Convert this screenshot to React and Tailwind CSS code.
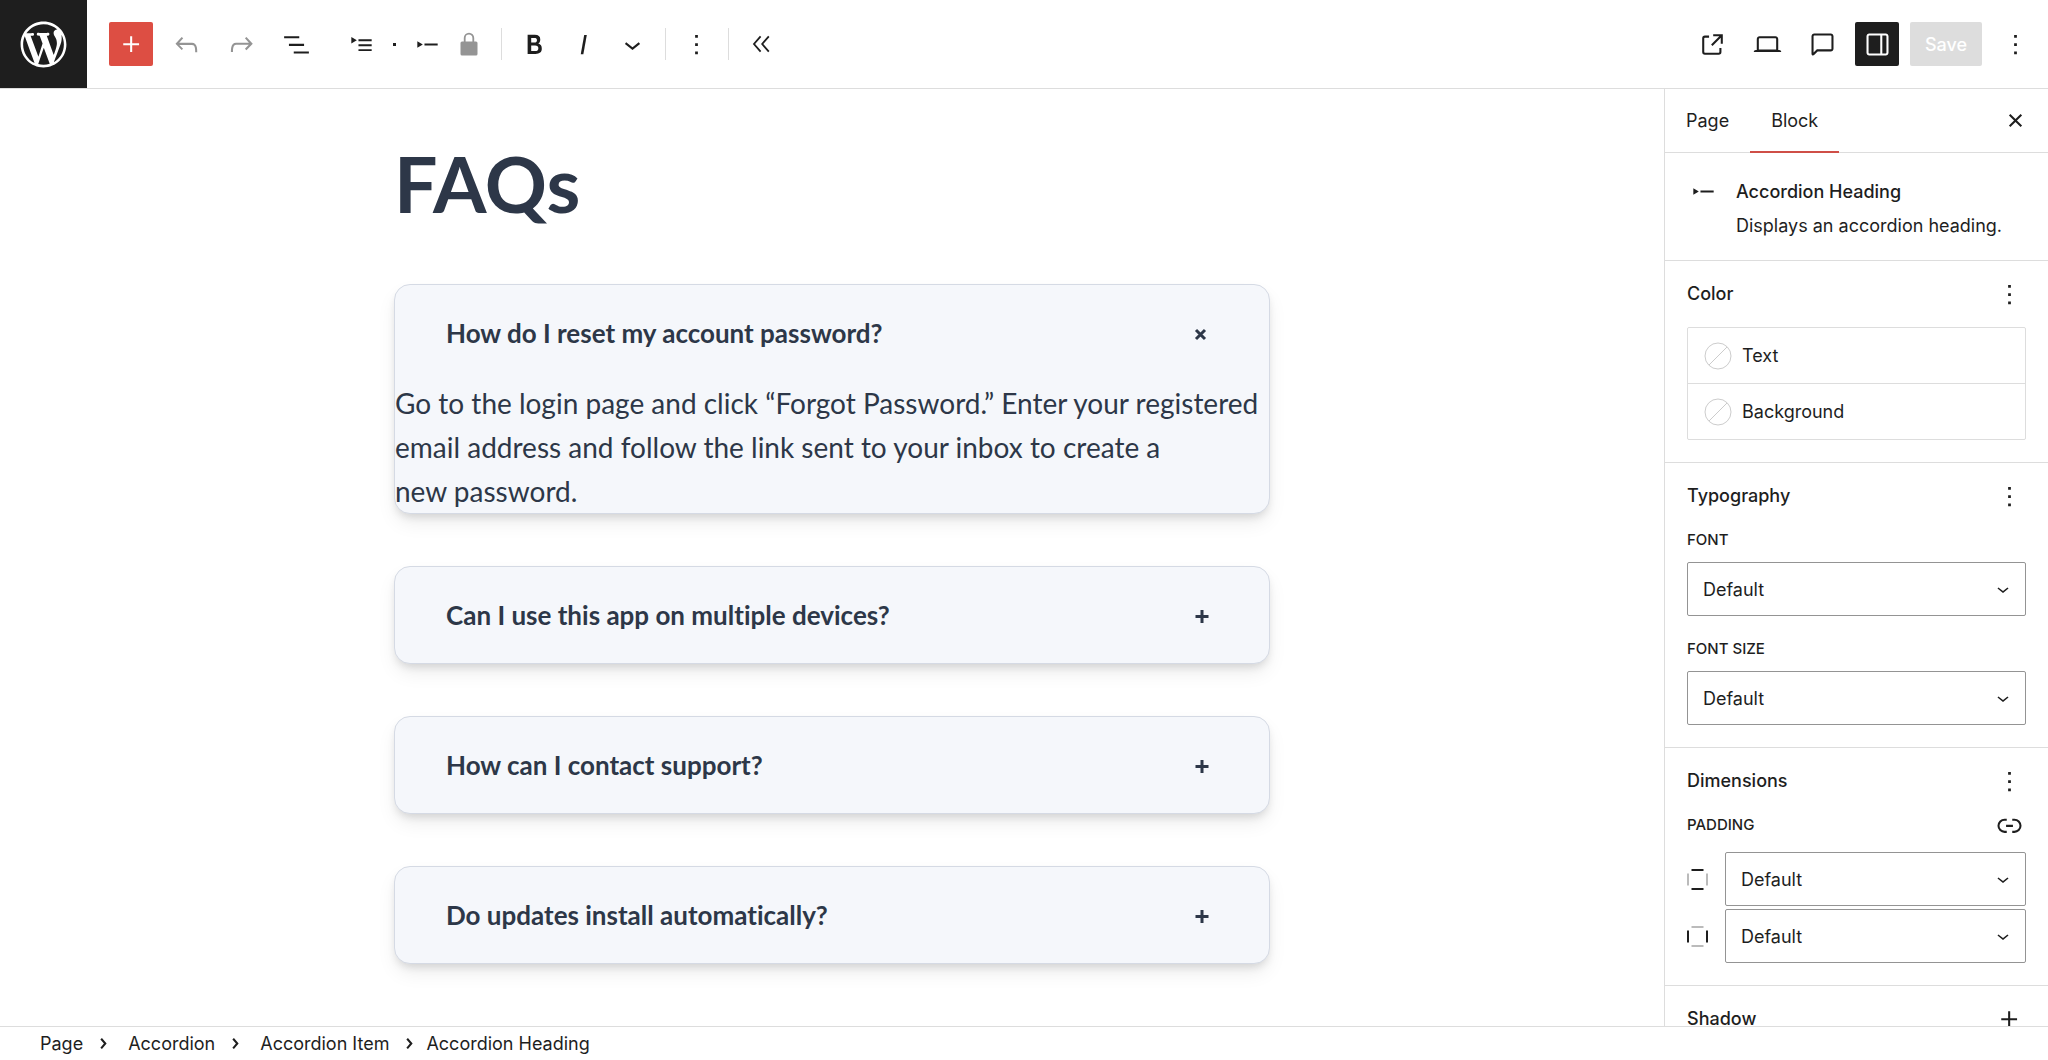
import React, { useState } from 'react'
import clsx from 'clsx'

const ICONS = {
  wordpress: 'M20 10c0-5.51-4.49-10-10-10C4.48 0 0 4.49 0 10c0 5.52 4.48 10 10 10 5.51 0 10-4.48 10-10zM7.78 15.37L4.37 6.22c.55-.02 1.17-.08 1.17-.08.5-.06.44-1.13-.06-1.11 0 0-1.45.11-2.37.11-.18 0-.37 0-.58-.01C4.12 2.69 6.87 1.11 10 1.11c2.33 0 4.45.87 6.05 2.34-.68-.11-1.65.39-1.65 1.58 0 .74.45 1.36.9 2.1.35.61.55 1.36.55 2.46 0 1.49-1.4 5-1.4 5l-3.03-8.37c.54-.02.82-.17.82-.17.5-.05.44-1.25-.06-1.22 0 0-1.44.12-2.38.12-.87 0-2.33-.12-2.33-.12-.5-.03-.56 1.2-.06 1.22l.92.08 1.26 3.41zM17.41 10c.24-.64.74-1.87.43-4.25.7 1.29 1.05 2.71 1.05 4.25 0 3.29-1.73 6.24-4.4 7.78.97-2.59 1.94-5.2 2.92-7.78zM6.1 18.09C3.12 16.65 1.11 13.53 1.11 10c0-1.3.23-2.48.72-3.59C3.25 10.3 4.67 14.2 6.1 18.09zm4.03-6.63l2.58 6.98c-.86.29-1.76.45-2.71.45-.79 0-1.57-.11-2.29-.33.81-2.38 1.62-4.74 2.42-7.1z',
  plus: 'M11 12.5V17.5H12.5V12.5H17.5V11H12.5V6H11V11H6V12.5H11Z',
  undo: 'M18.3 11.7c-.6-.6-1.4-.9-2.3-.9H6.7l2.9-3.3-1.1-1-4.5 5L8.5 16l1-1-2.7-2.7H16c.5 0 .9.2 1.3.5 1 1 1 3.4 1 4.5v.3h1.5v-.2c0-1.5 0-4.3-1.5-5.7z',
  redo: 'M15.6 6.5l-1.1 1 2.9 3.3H8c-.9 0-1.7.3-2.3.9-1.4 1.5-1.4 4.2-1.4 5.6v.2h1.5v-.3c0-1.1 0-3.5 1-4.5.3-.3.7-.5 1.3-.5h9.2L14.5 15l1.1 1.1 4.6-4.6-4.6-5z',
  listView: 'M3 6h11v1.5H3V6Zm3.5 5.5h11V13h-11v-1.5ZM21 17H10v1.5h11V17Z',
  accordion: 'M4.6 6.6v4.6L8.6 8.9zM9.8 8.2H19.4v1.4H9.8zM9.8 11.8H19.4v1.4H9.8zM9.8 15.4H19.4v1.4H9.8z',
  heading: 'M4.6 9.7v4.6L8.6 12zM9.8 11.3H19.4v1.4H9.8z',
  bold: 'M14.7 11.3c1-.6 1.5-1.6 1.5-3 0-2.3-1.3-3.4-4-3.4H7v14h5.8c1.4 0 2.5-.3 3.3-1 .8-.7 1.2-1.7 1.2-2.9.1-1.9-.8-3.1-2.6-3.7zm-5.1-4h2.3c.6 0 1.1.1 1.4.4.3.3.5.7.5 1.2s-.2 1-.5 1.2c-.3.3-.8.4-1.4.4H9.6V7.3zm4.6 9c-.4.3-1 .4-1.7.4H9.6v-3.9h2.9c.7 0 1.3.2 1.7.5.4.3.6.8.6 1.5s-.2 1.2-.6 1.5z',
  italic: 'M12.5 5L10 19h1.9l2.5-14z',
  chevronDown: 'M17.5 11.6L12 16l-5.5-4.4.9-1.2L12 14l4.5-3.6 1 1.2z',
  chevronRight: 'M10.86 8.04L14.28 12.03L10.86 16.02L9.72 15.04L12.3 12.03L9.72 9.02L10.86 8.04Z',
  more: 'M13 19h-2v-2h2v2zm0-6h-2v-2h2v2zm0-6h-2V5h2v2z',
  close: 'M12 13.06l3.712 3.713 1.061-1.06L13.061 12l3.712-3.712-1.06-1.06L12 10.938 8.288 7.227l-1.061 1.06L10.939 12l-3.712 3.712 1.06 1.061L12 13.061z',
  external: 'M19.5 4.5h-7V6h4.44l-5.97 5.97 1.06 1.06L18 7.06v4.44h1.5v-7Zm-13 1a2 2 0 0 0-2 2v10a2 2 0 0 0 2 2h10a2 2 0 0 0 2-2v-3H17v3a.5.5 0 0 1-.5.5h-10a.5.5 0 0 1-.5-.5v-10a.5.5 0 0 1 .5-.5h3V5.5h-3Z',
  desktop: 'M20.5 16h-.7V8c0-1.1-.9-2-2-2H6.2c-1.1 0-2 .9-2 2v8h-.7c-.8 0-1.5.7-1.5 1.5h20c0-.8-.7-1.5-1.5-1.5zM5.7 8c0-.3.2-.5.5-.5h11.6c.3 0 .5.2.5.5v7.6H5.7V8z',
  comment: 'M18 4H6c-1.1 0-2 .9-2 2v12.9c0 .6.5 1.1 1.1 1.1.3 0 .5-.1.8-.3L8.5 17H18c1.1 0 2-.9 2-2V6c0-1.1-.9-2-2-2zm.5 11c0 .3-.2.5-.5.5H7.9l-2.4 2.4V6c0-.3.2-.5.5-.5h12c.3 0 .5.2.5.5v9z',
  drawer: 'M18 4H6c-1.1 0-2 .9-2 2v12c0 1.1.9 2 2 2h12c1.1 0 2-.9 2-2V6c0-1.1-.9-2-2-2zm-4 14.5H6c-.3 0-.5-.2-.5-.5V6c0-.3.2-.5.5-.5h8v13zm4.5-.5c0 .3-.2.5-.5.5h-2.5v-13H18c.3 0 .5.2.5.5v12z',
  link: 'M10 17.389H8.444A5.194 5.194 0 1 1 8.444 7H10v1.5H8.444a3.694 3.694 0 0 0 0 7.389H10v1.5ZM14 7h1.556a5.194 5.194 0 0 1 0 10.39H14v-1.5h1.556a3.694 3.694 0 0 0 0-7.39H14V7Zm-4.5 6h5v-1.5h-5V13Z',
}

const FAQS = [
  { q:'How do I reset my account password?', a:'Go to the login page and click “Forgot Password.” Enter your registered email address and follow the link sent to your inbox to create a new\u00a0password.' },
  { q:'Can I use this app on multiple devices?', a:'Yes, sign in with the same account on each device.' },
  { q:'How can I contact support?', a:'Use the contact form on our support page.' },
  { q:'Do updates install automatically?', a:'Yes, updates are installed in the background.' },
]
const CRUMBS = ['Page', 'Accordion', 'Accordion Item']

function Icon({ name, className = 'size-[33px]', viewBox = '0 0 24 24' }) {
  return (
    <svg viewBox={viewBox} fill="currentColor" aria-hidden="true" className={clsx('shrink-0', className)}>
      <path d={ICONS[name]}/>
    </svg>
  )
}

function ToolButton({ label, icon, className = 'w-11', children, ...rest }) {
  return (
    <button type="button" aria-label={label} className={clsx('h-11 shrink-0 flex items-center justify-center rounded-[2px]', className)} {...rest}>
      {children || <Icon name={icon}/>}
    </button>
  )
}

const Divider = ({ className }) => <div className={clsx('w-px h-8 shrink-0 bg-[#ddd]', className)}/>

function Header() {
  return (
    <header className="flex h-[89px] shrink-0 items-center border-b border-[#ddd] bg-white">
      <a href="#" aria-label="View Pages" className="flex h-[88px] w-[87px] shrink-0 items-center justify-center bg-[#1e1e1e] text-white">
        <Icon name="wordpress" viewBox="-2 -2 24 24" className="size-[55px]"/>
      </a>

      <div className="flex items-center gap-[11px] pl-[22px]">
        <ToolButton label="Block Inserter" icon="plus" className="w-11 bg-[#dd4e43] text-white"/>
        <ToolButton label="Undo" icon="undo" className="w-11 text-[#949494]"/>
        <ToolButton label="Redo" icon="redo" className="w-11 text-[#949494]"/>
        <ToolButton label="Document Overview" icon="listView"/>
      </div>

      {/* Block toolbar */}
      <div className="flex items-center pl-[21px]">
        <ToolButton label="Select parent block: Accordion" icon="accordion"/>
        <span className="flex w-[22px] justify-center"><span className="size-[3px] bg-[#1e1e1e]"/></span>
        <ToolButton label="Accordion Heading" icon="heading"/>
        <ToolButton label="Unlock" className="w-10 text-[#949494]">
          <svg viewBox="0 0 18 24" fill="none" aria-hidden="true" className="h-6 w-[18px]">
            <path d="M4.7 11V6a4.3 4.3 0 0 1 8.6 0v5" stroke="currentColor" strokeWidth="1.8"/>
            <rect x="0.5" y="9.5" width="17" height="14" rx="1.5" fill="currentColor"/>
          </svg>
        </ToolButton>
        <Divider className="ml-3 mr-2"/>
        <ToolButton label="Bold" icon="bold" className="w-[49px]"/>
        <ToolButton label="Italic" icon="italic" className="w-[49px]"/>
        <ToolButton label="More" icon="chevronDown" className="w-[49px]"/>
        <Divider className="mx-2"/>
        <ToolButton label="Options" icon="more"/>
        <Divider className="mx-2.5"/>
        <ToolButton label="Hide block tools">
          <svg viewBox="0 0 18 18" fill="none" stroke="currentColor" strokeWidth="1.8" aria-hidden="true" className="size-[18px]">
            <path d="M8.6 1.4 2 9l6.6 7.6M16.8 1.4 10.2 9l6.6 7.6"/>
          </svg>
        </ToolButton>
      </div>

      <div className="ml-auto flex items-center gap-[11px] pr-[11px]">
        <ToolButton label="View Page" icon="external"/>
        <ToolButton label="View" icon="desktop"/>
        <ToolButton label="All notes" icon="comment"/>
        <ToolButton label="Settings" icon="drawer" className="w-11 bg-[#1e1e1e] text-white"/>
        <button type="button" className="h-11 w-[72px] rounded-[2px] bg-[#ddd] text-[18px] font-medium text-white">Save</button>
        <ToolButton label="Options" icon="more"/>
      </div>
    </header>
  )
}

function Faq({ item, open, onToggle }) {
  return (
    <section className="rounded-2xl border border-[#d5dae4] bg-[#f5f7fb] shadow-[0_10px_20px_-2px_rgba(0,0,0,0.08),0_5px_10px_-3px_rgba(0,0,0,0.14)]">
      <h3>
        <button type="button" onClick={onToggle} aria-expanded={open}
          className="flex h-24 w-full items-center justify-between pl-[51px] pr-[59px] text-left font-[Lato,sans-serif] text-[26px] font-bold [font-variant-ligatures:none]">
          {item.q}
          <svg viewBox="0 0 16 16" fill="none" stroke="currentColor" strokeWidth="3" aria-hidden="true" className="size-4">
            <path d={open ? 'M2 5 11 14M11 5 2 14' : 'M8 3v13M1.5 9.5h13'}/>
          </svg>
        </button>
      </h3>
      {open && <p className="font-[Lato,sans-serif] text-[28px] leading-[44px]">{item.a}</p>}
    </section>
  )
}

function SelectBox({ id, label }) {
  return (
    <div className="relative flex-1 text-[#1e1e1e]">
      <select id={id} aria-label={label} defaultValue="default"
        className="h-[54px] w-full appearance-none rounded-[2px] border border-[#949494] bg-white px-[15px] text-[18px]">
        <option value="default">Default</option>
        <option value="custom">Custom</option>
      </select>
      <Icon name="chevronDown" className="pointer-events-none absolute right-[11px] top-[15px] size-6"/>
    </div>
  )
}

// small square with one pair of sides highlighted
function SidesIcon({ axis }) {
  const v = axis === 'vertical'
  return (
    <svg viewBox="0 0 21 21" fill="none" strokeWidth="2" aria-hidden="true" className="size-[21px] shrink-0">
      <path d="M4.5 1h12M4.5 20h12" stroke={v ? '#1e1e1e' : '#bbb'}/>
      <path d="M1 4.5v12M20 4.5v12" stroke={v ? '#bbb' : '#1e1e1e'}/>
    </svg>
  )
}

function Panel({ title, icon = 'more', children }) {
  return (
    <section className="shrink-0 border-b border-[#ddd] px-[22px] pt-[22px] pb-[22px]">
      <div className="flex h-[22px] items-center justify-between">
        <h2 className="text-[18px] leading-[22px] font-medium">{title}</h2>
        <button type="button" aria-label={`${title} options`}><Icon name={icon}/></button>
      </div>
      {children}
    </section>
  )
}

const LABEL = 'block text-[15px] leading-[22px] font-medium uppercase'

function Sidebar() {
  const [tab, setTab] = useState('Block')
  return (
    <aside className="flex w-96 shrink-0 flex-col overflow-hidden border-l border-[#ddd] bg-white">
      <div className="flex h-16 shrink-0 items-stretch border-b border-[#ddd]">
        {['Page', 'Block'].map(t => (
          <button key={t} type="button" onClick={() => setTab(t)}
            className={clsx('-mb-px border-b-2 px-[21px] text-[18px]', tab === t ? 'border-[#cf4f47]' : 'border-transparent')}>
            {t}
          </button>
        ))}
        <button type="button" aria-label="Close Settings" className="ml-auto mr-4"><Icon name="close"/></button>
      </div>

      <div className="flex shrink-0 gap-4 border-b border-[#ddd] px-[22px] py-[22px]">
        <Icon name="heading"/>
        <div>
          <h2 className="text-[18px] leading-[33px] font-medium">Accordion Heading</h2>
          <p className="mt-1.5 text-[18px] leading-6">Displays an accordion heading.</p>
        </div>
      </div>

      <Panel title="Color">
        <div className="mt-[22px] grid gap-px overflow-hidden rounded-[2px] border border-[#ddd] bg-[#ddd]">
          {['Text', 'Background'].map(c => (
            <button key={c} type="button" className="flex h-[55px] items-center gap-2.5 bg-white px-4 text-[18px]">
              <svg viewBox="0 0 28 28" fill="none" stroke="#ccc" aria-hidden="true" className="size-7">
                <circle cx="14" cy="14" r="13"/>
                <path d="M5 23 23 5"/>
              </svg>
              {c}
            </button>
          ))}
        </div>
      </Panel>

      <Panel title="Typography">
        <label htmlFor="font" className={clsx(LABEL, 'mt-[22px] mb-[11px]')}>Font</label>
        <SelectBox id="font"/>
        <label htmlFor="font-size" className={clsx(LABEL, 'mt-[22px] mb-[11px]')}>Font size</label>
        <SelectBox id="font-size"/>
      </Panel>

      <Panel title="Dimensions">
        <div className="mt-[22px] mb-4 flex h-[22px] items-center justify-between">
          <span className={LABEL}>Padding</span>
          <button type="button" aria-label="Unlink sides"><Icon name="link"/></button>
        </div>
        <div className="flex flex-col gap-[3px]">
          <div className="flex items-center gap-[17px]">
            <SidesIcon axis="vertical"/>
            <SelectBox label="Vertical padding"/>
          </div>
          <div className="flex items-center gap-[17px]">
            <SidesIcon axis="horizontal"/>
            <SelectBox label="Horizontal padding"/>
          </div>
        </div>
      </Panel>

      <Panel title="Shadow" icon="plus"/>
    </aside>
  )
}

export default function App() {
  const [open, setOpen] = useState(0)

  return (
    <div className="flex h-screen flex-col overflow-hidden bg-white font-[Inter,sans-serif] text-[#1e1e1e]">
      <Header/>
      <div className="flex min-h-0 flex-1">
        <main className="min-w-0 flex-1 overflow-hidden px-6 text-[#2d3748]">
          <div className="mx-auto max-w-[876px] pt-12">
            <h1 className="font-[Lato,sans-serif] text-[77px] leading-[92px] font-bold">FAQs</h1>
            <div className="mt-[55px] flex flex-col gap-[52px]">
              {FAQS.map((f, i) => (
                <Faq key={f.q} item={f} open={open === i} onToggle={() => setOpen(open === i ? -1 : i)}/>
              ))}
            </div>
          </div>
        </main>
        <Sidebar/>
      </div>

      <footer className="h-[34px] shrink-0 border-t border-[#ddd] bg-white">
        <nav aria-label="Block breadcrumb" className="flex h-full items-center pl-10 text-[18px]">
          {CRUMBS.map(c => (
            <React.Fragment key={c}>
              <a href="#" className="not-first:ml-2">{c}</a>
              <Icon name="chevronRight" className="ml-1 size-[33px]"/>
            </React.Fragment>
          ))}
          <span aria-current="true">Accordion Heading</span>
        </nav>
      </footer>
    </div>
  )
}
